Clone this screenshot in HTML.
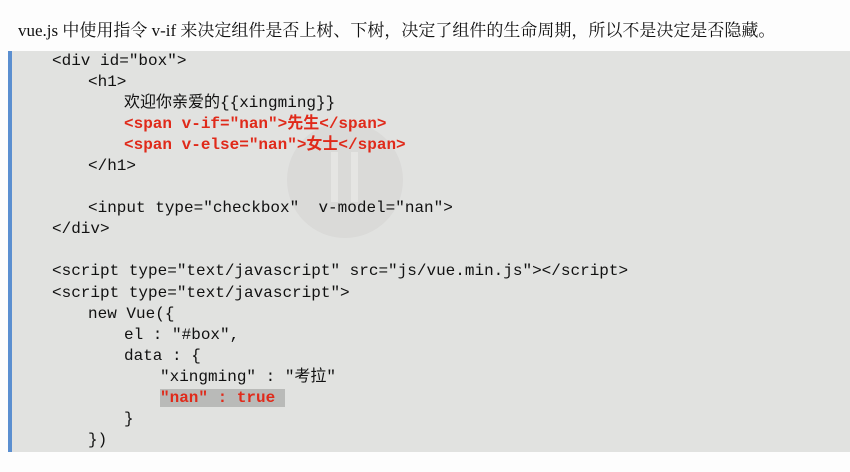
<!DOCTYPE html>
<html><head><meta charset="utf-8"><style>
body{margin:0;width:850px;height:452px;overflow:hidden;background:#fdfdfd;position:relative}
.t{position:absolute;left:18px;top:16px;font:17px "Liberation Serif","Noto Serif CJK SC",serif;color:#111;white-space:nowrap}
.box{position:absolute;left:8px;top:51px;width:842px;height:401px;background:#e1e2e0;border-left:4px solid #5b8fd0}
.wm{position:absolute;left:287px;top:122px;width:116px;height:116px;border-radius:50%;background:#dadad8}
.bar{position:absolute;top:30px;width:7px;height:50px;background:#e5e5e3}
pre{position:absolute;left:0;top:51px;margin:0;font:16px "Liberation Mono","Noto Sans CJK SC",monospace;line-height:21.05px;color:#111}
.l{position:relative;height:21.05px;white-space:pre}
.r{color:#e02a1a;font-weight:bold}
.hl{background:#b9bab8}
</style></head><body>
<div class="t">vue.js 中使用指令 v-if 来决定组件是否上树、下树，决定了组件的生命周期，所以不是决定是否隐藏。</div>
<div class="box"></div>
<div class="wm"><div class="bar" style="left:44px"></div><div class="bar" style="left:64px"></div></div>
<pre>
<div class="l" style="left:52px">&lt;div id="box"&gt;</div><div class="l" style="left:88px">&lt;h1&gt;</div><div class="l" style="left:124px">欢迎你亲爱的{{xingming}}</div><div class="l r" style="left:124px">&lt;span v-if="nan"&gt;先生&lt;/span&gt;</div><div class="l r" style="left:124px">&lt;span v-else="nan"&gt;女士&lt;/span&gt;</div><div class="l" style="left:88px">&lt;/h1&gt;</div><div class="l"> </div><div class="l" style="left:88px">&lt;input type="checkbox"  v-model="nan"&gt;</div><div class="l" style="left:52px">&lt;/div&gt;</div><div class="l"> </div><div class="l" style="left:52px">&lt;script type="text/javascript" src="js/vue.min.js"&gt;&lt;/script&gt;</div><div class="l" style="left:52px">&lt;script type="text/javascript"&gt;</div><div class="l" style="left:88px">new Vue({</div><div class="l" style="left:124px">el : "#box",</div><div class="l" style="left:124px">data : {</div><div class="l" style="left:160px">"xingming" : "考拉"</div><div class="l r" style="left:160px"><span class="hl">"nan" : true </span></div><div class="l" style="left:124px">}</div><div class="l" style="left:88px">})</div>
</pre>
</body></html>
